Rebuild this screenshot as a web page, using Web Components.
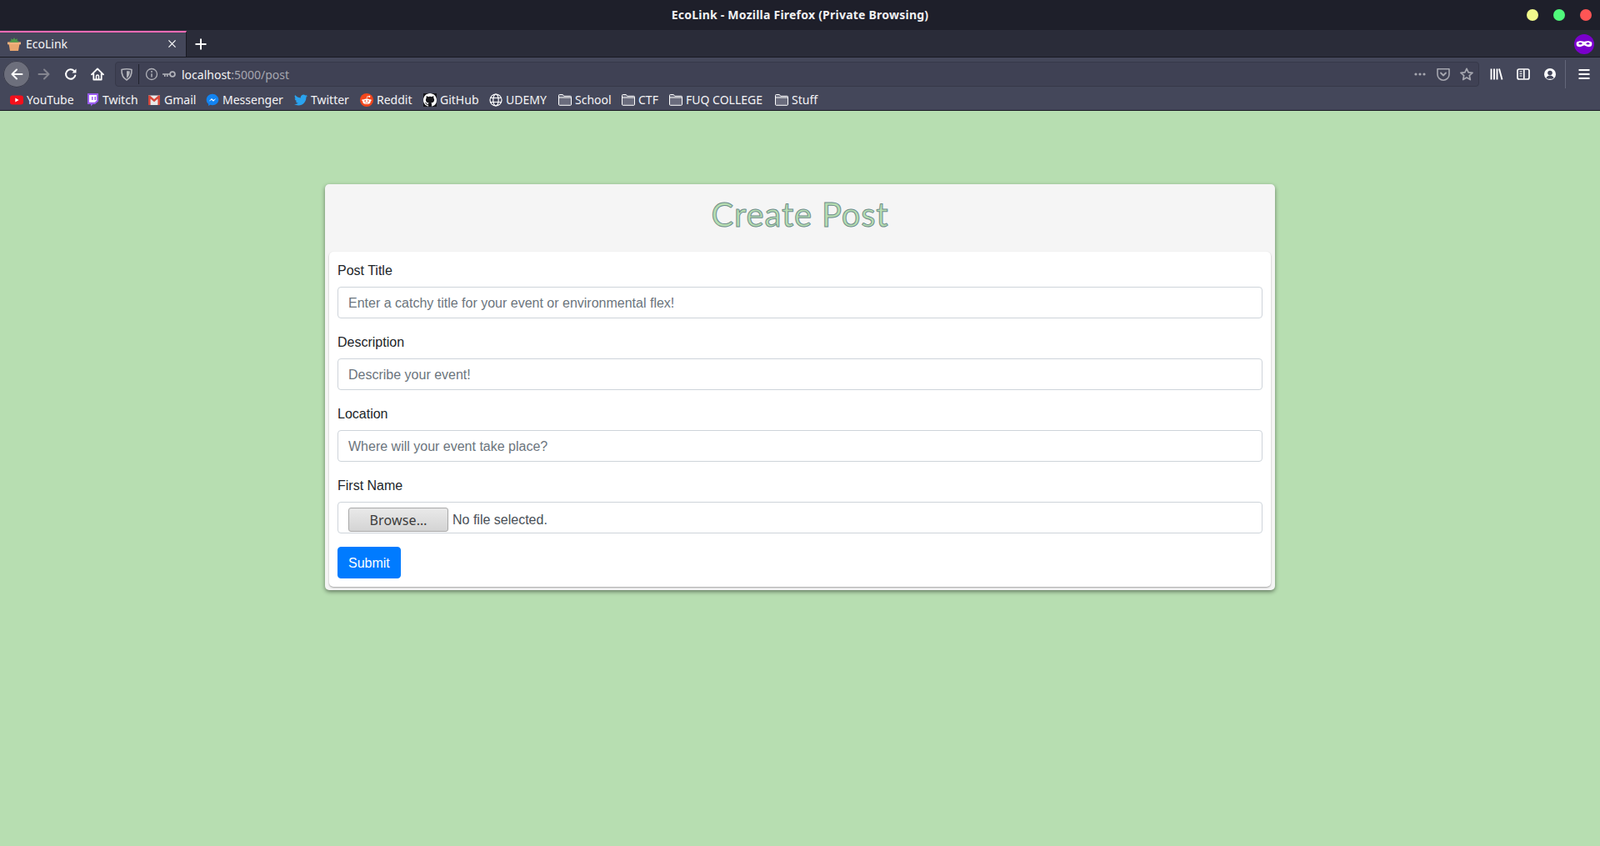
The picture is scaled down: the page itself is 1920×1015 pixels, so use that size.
<!DOCTYPE html>
<html lang="en">
<head>
<meta charset="utf-8">
<title>EcoLink</title>
<style>
	html, body {
		margin: 0;
		height: 100%;
		overflow: hidden;
	}
</style>
</head>
<body>
<ff-window>
	<ff-titlebar slot="chrome" heading="EcoLink - Mozilla Firefox (Private Browsing)"></ff-titlebar>
	<ff-tabbar slot="chrome" label="EcoLink"></ff-tabbar>
	<ff-toolbar slot="chrome"></ff-toolbar>
	<ff-bookmarks slot="chrome">
		<ff-bookmark icon="youtube" width="91">YouTube</ff-bookmark>
		<ff-bookmark icon="twitch" width="74">Twitch</ff-bookmark>
		<ff-bookmark icon="gmail" width="70">Gmail</ff-bookmark>
		<ff-bookmark icon="messenger" width="106">Messenger</ff-bookmark>
		<ff-bookmark icon="twitter" width="79">Twitter</ff-bookmark>
		<ff-bookmark icon="reddit" width="76">Reddit</ff-bookmark>
		<ff-bookmark icon="github" width="79">GitHub</ff-bookmark>
		<ff-bookmark icon="globe" width="83">UDEMY</ff-bookmark>
		<ff-bookmark icon="folder" width="76">School</ff-bookmark>
		<ff-bookmark icon="folder" width="57">CTF</ff-bookmark>
		<ff-bookmark icon="folder" width="127">FUQ COLLEGE</ff-bookmark>
		<ff-bookmark icon="folder" width="70">Stuff</ff-bookmark>
	</ff-bookmarks>

	<eco-post-card heading="Create Post">
		<eco-field label="Post Title" placeholder="Enter a catchy title for your event or environmental flex!"></eco-field>
		<eco-field label="Description" placeholder="Describe your event!"></eco-field>
		<eco-field label="Location" placeholder="Where will your event take place?"></eco-field>
		<eco-field label="First Name" type="file"></eco-field>
		<eco-button>Submit</eco-button>
	</eco-post-card>
</ff-window>

<script>
const UI_FONT = `"Noto Sans", sans-serif`;
const PAGE_FONT = `"Liberation Sans", Arial, sans-serif`;

const icons = {
	favicon: `<path d="M1.500 7.500h13L13 16H3z" fill="#e9a66f"/><path d="M0 5.500h16v2.800H0z" fill="#f0b27e"/><path d="M8 0l1.400 2.400L12 1.200l-.5 2.600 2.300.9-1.300 1H3.500l-1.300-1 2.300-.9L4 1.200l2.600 1.200z" fill="#4f9a4a"/>`,
	back: `<path d="M14.500 8H2.500M8 2.500 2.500 8 8 13.500" fill="none" stroke="#fff" stroke-width="2" stroke-linecap="round" stroke-linejoin="round"/>`,
	forward: `<path d="M1.500 8h12M8 2.500 13.500 8 8 13.500" fill="none" stroke="#84858f" stroke-width="2" stroke-linecap="round" stroke-linejoin="round"/>`,
	reload: `<path d="M13.300 9.500A5.700 5.700 0 1 1 12 4.200" fill="none" stroke="#fff" stroke-width="2" stroke-linecap="round"/><path d="M14.500 1.500v5h-5z" fill="#fff"/>`,
	home: `<path d="M1 8.300 8 1.500l7 6.800M3.300 7v7.500h9.400V7" fill="none" stroke="#fff" stroke-width="1.800" stroke-linecap="round" stroke-linejoin="round"/><path d="M6.500 14.500v-4a1.500 1.500 0 0 1 3 0v4" fill="none" stroke="#fff" stroke-width="1.500"/>`,
	shield: `<path d="M2 2.500C5 1.700 11 1.700 14 2.500c.3 6-1.500 10-6 12.500C3.500 12.500 1.700 8.500 2 2.500z" fill="none" stroke="#b1b2b9" stroke-width="1.600" stroke-linejoin="round"/><path d="M8 4.200c1.400 0 2.500.1 3.800.4.100 3.600-1.100 6.400-3.800 8.100z" fill="#b1b2b9"/>`,
	info: `<circle cx="8" cy="8" r="6.500" fill="none" stroke="#b1b2b9" stroke-width="1.300"/><path d="M8 7.200v4.300" stroke="#b1b2b9" stroke-width="1.500"/><circle cx="8" cy="4.900" r="1" fill="#b1b2b9"/>`,
	key: `<circle cx="12" cy="8" r="2.900" fill="none" stroke="#b1b2b9" stroke-width="1.800"/><path d="M0 7.200h9.200v1.600H6.500V11H5V8.800H3.600V11H2V8.800H0z" fill="#b1b2b9"/>`,
	dots: `<circle cx="3" cy="8" r="1.600" fill="#a6a7b0"/><circle cx="8" cy="8" r="1.600" fill="#a6a7b0"/><circle cx="13" cy="8" r="1.600" fill="#a6a7b0"/>`,
	pocket: `<path d="M1 1.800h14v6.400a7 7 0 0 1-14 0z" fill="none" stroke="#a6a7b0" stroke-width="1.600" stroke-linejoin="round"/><path d="M5 6.500l3 3 3-3" fill="none" stroke="#a6a7b0" stroke-width="1.800" stroke-linecap="round" stroke-linejoin="round"/>`,
	star: `<path d="M8 1.300l2.100 4.500 4.900.6-3.700 3.300 1 4.900L8 12.100l-4.300 2.500 1-4.900L1 6.400l4.900-.6z" fill="none" stroke="#a6a7b0" stroke-width="1.700" stroke-linejoin="round"/>`,
	library: `<path d="M1.500 1.500v13M5 1.500v13M8.500 1.500v13M11 1.500l3.500 13" fill="none" stroke="#fff" stroke-width="1.900"/>`,
	sidebar: `<rect x="1" y="2" width="14" height="12" rx="2" fill="none" stroke="#fff" stroke-width="1.700"/><path d="M8.800 2.500v11" stroke="#fff" stroke-width="1.700"/><path d="M3.500 5h3M3.500 7.500h3M3.500 10h3" stroke="#fff" stroke-width="1.200"/>`,
	account: `<circle cx="8" cy="8" r="7" fill="#fff"/><circle cx="8" cy="6.500" r="2.800" fill="#42455a"/><path d="M3.400 12.400c1-2 2.800-3 4.600-3s3.600 1 4.600 3A6 6 0 0 1 8 13.600a6 6 0 0 1-4.600-1.200z" fill="#42455a"/>`,
	menu: `<path d="M1.500 3h13M1.500 8h13M1.500 13h13" stroke="#fff" stroke-width="2"/>`,
	close: `<path d="M3 3l10 10M13 3 3 13" stroke="#fff" stroke-width="1.500"/>`,
	plus: `<path d="M8 1.500v13M1.500 8h13" stroke="#fff" stroke-width="2"/>`,
	mask: `<circle cx="8" cy="8" r="8" fill="#7a00cc"/><path d="M1.900 6.600C3 5.400 6 5.300 8 6c2-.7 5-.6 6.100.6.400 1.300 0 2.800-1 3.300-1.700.6-3.500-.1-5.100-1-1.600.9-3.400 1.600-5.100 1-1-.5-1.400-2-1-3.300z" fill="#fff"/><ellipse cx="5" cy="7.500" rx="1.300" ry=".8" fill="#7a00cc"/><ellipse cx="11" cy="7.500" rx="1.300" ry=".8" fill="#7a00cc"/>`,
	youtube: `<rect x="0" y="2.500" width="16" height="11" rx="3" fill="#f4101c"/><path d="M6.300 5.500v5L10.600 8z" fill="#fff"/>`,
	twitch: `<path d="M2 0h13v9.500L11 13H8.500L6 15.500V13H2z" fill="#9a5cf0"/><path d="M4 2h9v6.500L10.800 10.800H4z" fill="#fff"/><path d="M7 4h1.500v4H7zM10.500 4H12v4h-1.500z" fill="#9a5cf0"/>`,
	gmail: `<rect x="1" y="2.500" width="14" height="11.500" fill="#e8e8e8"/><path d="M1 2.500h1.800L8 7l5.200-4.500H15V14h-2.600V6.600L8 10.200 3.600 6.600V14H1z" fill="#d6473a"/>`,
	messenger: `<path d="M8 .8C3.900.8.700 3.800.700 7.700c0 2.100.9 3.900 2.400 5.100V15l2.200-1.200c.8.200 1.700.4 2.700.4 4.100 0 7.300-3 7.300-6.500S12.100.8 8 .8z" fill="#1283f0"/><path d="M3.500 9.800 7 5.900l2 2 3.500-2-3.500 3.900-2-2z" fill="#fff"/>`,
	twitter: `<g transform="scale(.667)"><path d="M23.953 4.570a10 10 0 0 1-2.825.775 4.958 4.958 0 0 0 2.163-2.723c-.951.555-2.005.959-3.127 1.184a4.920 4.920 0 0 0-8.384 4.482C7.690 8.095 4.067 6.130 1.640 3.162a4.822 4.822 0 0 0-.666 2.475c0 1.710.870 3.213 2.188 4.096a4.904 4.904 0 0 1-2.228-.616v.060a4.923 4.923 0 0 0 3.946 4.827 4.996 4.996 0 0 1-2.212.085 4.936 4.936 0 0 0 4.604 3.417 9.867 9.867 0 0 1-6.102 2.105c-.390 0-.779-.023-1.170-.067a13.995 13.995 0 0 0 7.557 2.209c9.053 0 13.998-7.496 13.998-13.985 0-.210 0-.420-.015-.630A9.935 9.935 0 0 0 24 4.590z" fill="#2aa3ef"/></g>`,
	reddit: `<circle cx="8" cy="8" r="8" fill="#f2461c"/><ellipse cx="8" cy="9.800" rx="4.700" ry="3.200" fill="#fff"/><circle cx="3.400" cy="8.300" r="1.100" fill="#fff"/><circle cx="12.600" cy="8.300" r="1.100" fill="#fff"/><circle cx="11.300" cy="3.800" r="1" fill="#fff"/><path d="M8 6.700 8.800 3.600l2.300.4" fill="none" stroke="#fff" stroke-width=".7"/><circle cx="6.200" cy="9.100" r=".9" fill="#f2461c"/><circle cx="9.800" cy="9.100" r=".9" fill="#f2461c"/><path d="M6.200 11.300c1 .6 2.600.6 3.600 0" fill="none" stroke="#f2461c" stroke-width=".7"/>`,
	github: `<rect width="16" height="16" fill="#16161a"/><path d="M8 0C3.580 0 0 3.580 0 8c0 3.540 2.290 6.530 5.470 7.590.4.070.550-.170.550-.380 0-.190-.010-.820-.010-1.490-2.010.370-2.530-.490-2.690-.940-.090-.230-.480-.940-.820-1.130-.280-.150-.680-.520-.010-.530.630-.010 1.080.580 1.230.820.720 1.210 1.870.870 2.330.660.070-.520.280-.870.510-1.070-1.780-.200-3.640-.890-3.640-3.950 0-.870.310-1.590.820-2.150-.080-.200-.360-1.020.080-2.120 0 0 .670-.210 2.200.820.640-.180 1.320-.270 2-.270.680 0 1.360.090 2 .270 1.530-1.040 2.200-.820 2.200-.820.440 1.100.160 1.920.080 2.120.510.560.820 1.270.820 2.150 0 3.070-1.870 3.750-3.650 3.950.290.250.540.730.540 1.480 0 1.070-.010 1.930-.010 2.200 0 .210.150.460.550.380A8.013 8.013 0 0 0 16 8c0-4.420-3.580-8-8-8z" fill="#fff"/>`,
	globe: `<g fill="none" stroke="#fff" stroke-width="1.200"><circle cx="8" cy="8" r="7"/><ellipse cx="8" cy="8" rx="3.200" ry="7"/><path d="M1.600 5.500h12.800M1.600 10.500h12.800"/></g>`,
	folder: `<path d="M.5 2.500a1 1 0 0 1 1-1h3.800l1.400 1.800h7.800a1 1 0 0 1 1 1v9a1 1 0 0 1-1 1h-13a1 1 0 0 1-1-1z" fill="#6a6c7d" stroke="#fff"/><path d="M.5 5h15" stroke="#fff"/>`,
};

class FfIcon extends HTMLElement {

	constructor() {
		super();

		const size = this.getAttribute('size') || 16;

		this.attachShadow({ mode: 'open' });
		this.shadowRoot.innerHTML = `
			<style>
				:host {
					display: block;
					flex: none;
					width: ${size}px;
					height: ${size}px;
				}

				svg {
					display: block;
					width: 100%;
					height: 100%;
				}
			</style>
			<svg viewBox="0 0 16 16" aria-hidden="true">${icons[this.getAttribute('name')]}</svg>
		`;
	}

}

const windowTemplate = document.createElement('template');
windowTemplate.innerHTML = `
	<style>
		:host {
			display: flex;
			flex-direction: column;
			height: 1015px;
		}

		main {
			flex: 1;
			padding-top: 88px;
			background: #b7deb1;
		}
	</style>
	<slot name="chrome"></slot>
	<main><slot></slot></main>
`;

class FfWindow extends HTMLElement {

	constructor() {
		super();

		this.attachShadow({ mode: 'open' });
		this.shadowRoot.appendChild(windowTemplate.content.cloneNode(true));
	}

}

class FfTitlebar extends HTMLElement {

	constructor() {
		super();

		this.attachShadow({ mode: 'open' });
		this.shadowRoot.innerHTML = `
			<style>
				:host {
					display: grid;
					grid-template-columns: 1fr auto 1fr;
					align-items: center;
					box-sizing: border-box;
					height: 36px;
					background: #1e1f2a;
					color: #f1f1f3;
					font: 700 14px ${UI_FONT};
					letter-spacing: .23px;
				}

				.title {
					padding-bottom: 1px;
				}

				.dots {
					display: flex;
					justify-content: flex-end;
					gap: 18px;
					padding-right: 10px;
				}

				.dots span {
					width: 14px;
					height: 14px;
					border-radius: 50%;
				}
			</style>
			<span></span>
			<span class="title">${this.getAttribute('heading')}</span>
			<div class="dots">
				<span style="background: #f1fa8c"></span>
				<span style="background: #50fa7b"></span>
				<span style="background: #ff5555"></span>
			</div>
		`;
	}

}

class FfTabbar extends HTMLElement {

	constructor() {
		super();

		this.attachShadow({ mode: 'open' });
		this.shadowRoot.innerHTML = `
			<style>
				:host {
					display: flex;
					align-items: stretch;
					height: 33px;
					box-sizing: border-box;
					padding-top: 1px;
					background: #2a2c39;
					border-bottom: 1px solid #191a23;
					font: 14px ${UI_FONT};
					color: #f4f4f6;
				}

				.tab {
					display: flex;
					align-items: center;
					gap: 6px;
					box-sizing: border-box;
					width: 224px;
					padding: 0 10px 2px 9px;
					background: #44475a;
					border-top: 2px solid #ff6bb5;
					border-right: 1px solid #191a23;
				}

				.close {
					margin-left: auto;
				}

				.new {
					margin: auto 0 auto 9px;
				}

				.badge {
					margin: auto 7px auto auto;
				}
			</style>
			<div class="tab">
				<ff-icon name="favicon"></ff-icon>
				<span>${this.getAttribute('label')}</span>
				<ff-icon class="close" name="close" size="13"></ff-icon>
			</div>
			<ff-icon class="new" name="plus" size="16"></ff-icon>
			<ff-icon class="badge" name="mask" size="24"></ff-icon>
		`;
	}

}

const toolbarTemplate = document.createElement('template');
toolbarTemplate.innerHTML = `
	<style>
		:host {
			display: flex;
			align-items: center;
			height: 40px;
			padding: 0 11px 0 4px;
			background: #44475a;
			font: 14px ${UI_FONT};
		}

		.back {
			display: grid;
			place-items: center;
			flex: none;
			width: 32px;
			height: 32px;
			border-radius: 50%;
			background: #6d6f7c;
			box-shadow: inset 0 0 0 1px #3a3c4c;
		}

		.forward {
			margin-left: 9px;
		}

		.reload {
			margin-left: 16px;
		}

		.home {
			margin-left: 16px;
		}

		.url {
			display: flex;
			align-items: center;
			flex: 1;
			box-sizing: border-box;
			height: 30px;
			margin-left: 13px;
			padding: 0 6px 0 0;
			border: 1px solid #363849;
			border-radius: 4px;
			background: #3f4154;
		}

		.shield {
			margin-left: 5px;
		}

		.divider {
			width: 1px;
			height: 24px;
			margin-left: 6px;
			background: #22232e;
		}

		.info {
			margin-left: 7px;
		}

		.key {
			margin-left: 5px;
		}

		.address {
			margin-left: 7px;
			color: #f4f4f6;
			white-space: nowrap;
		}

		.address span {
			color: #a6a7b0;
		}

		.dots {
			margin-left: auto;
		}

		.pocket {
			margin-left: 12px;
		}

		.star {
			margin-left: 12px;
		}

		.library {
			margin-left: 13px;
		}

		.sidebar,
		.account {
			margin-left: 16px;
		}

		.sep {
			width: 1px;
			height: 34px;
			margin: 0 14px 0 10px;
			background: #64667a;
		}
	</style>
	<div class="back"><ff-icon name="back"></ff-icon></div>
	<ff-icon class="forward" name="forward"></ff-icon>
	<ff-icon class="reload" name="reload"></ff-icon>
	<ff-icon class="home" name="home"></ff-icon>
	<div class="url">
		<ff-icon class="shield" name="shield"></ff-icon>
		<div class="divider"></div>
		<ff-icon class="info" name="info"></ff-icon>
		<ff-icon class="key" name="key"></ff-icon>
		<div class="address">localhost<span>:5000/post</span></div>
		<ff-icon class="dots" name="dots"></ff-icon>
		<ff-icon class="pocket" name="pocket"></ff-icon>
		<ff-icon class="star" name="star"></ff-icon>
	</div>
	<ff-icon class="library" name="library"></ff-icon>
	<ff-icon class="sidebar" name="sidebar"></ff-icon>
	<ff-icon class="account" name="account"></ff-icon>
	<div class="sep"></div>
	<ff-icon name="menu"></ff-icon>
`;

class FfToolbar extends HTMLElement {

	constructor() {
		super();

		this.attachShadow({ mode: 'open' });
		this.shadowRoot.appendChild(toolbarTemplate.content.cloneNode(true));
	}

}

const bookmarksTemplate = document.createElement('template');
bookmarksTemplate.innerHTML = `
	<style>
		:host {
			display: flex;
			align-items: center;
			box-sizing: border-box;
			height: 24px;
			padding: 0 0 2px 12px;
			background: #44475a;
			border-bottom: 1px solid #191a23;
		}
	</style>
	<slot></slot>
`;

class FfBookmarks extends HTMLElement {

	constructor() {
		super();

		this.attachShadow({ mode: 'open' });
		this.shadowRoot.appendChild(bookmarksTemplate.content.cloneNode(true));
	}

}

class FfBookmark extends HTMLElement {

	constructor() {
		super();

		this.attachShadow({ mode: 'open' });
		this.shadowRoot.innerHTML = `
			<style>
				:host {
					display: flex;
					align-items: center;
					gap: 4px;
					flex: none;
					width: ${this.getAttribute('width')}px;
					color: #f4f4f6;
					font: 14px ${UI_FONT};
					white-space: nowrap;
				}
			</style>
			<ff-icon name="${this.getAttribute('icon')}"></ff-icon>
			<slot></slot>
		`;
	}

}

const cardTemplate = document.createElement('template');
cardTemplate.innerHTML = `
	<style>
		:host {
			display: block;
			box-sizing: border-box;
			width: 1140px;
			margin: 0 auto;
			padding: 0 5px 4px;
			border-radius: 5px;
			background: #f5f5f5;
			box-shadow: 0 2px 5px rgba(0, 0, 0, .45);
		}

		h1 {
			display: flex;
			align-items: center;
			justify-content: center;
			box-sizing: border-box;
			height: 81px;
			margin: 0;
			padding-bottom: 9px;
			font: 400 40px Lato, sans-serif;
			letter-spacing: .8px;
			color: #b7deb1;
			-webkit-text-stroke: 1px #6f8f8c;
		}

		.body {
			padding: 10px;
			border-radius: 5px;
			background: #fff;
			box-shadow: 0 1px 2px rgba(0, 0, 0, .35);
			display: flex;
			flex-direction: column;
			align-items: flex-start;
			gap: 16px;
		}
	</style>
	<h1></h1>
	<div class="body"><slot></slot></div>
`;

class EcoPostCard extends HTMLElement {

	constructor() {
		super();

		this.attachShadow({ mode: 'open' });
		this.shadowRoot.appendChild(cardTemplate.content.cloneNode(true));
		this.shadowRoot.querySelector('h1').textContent = this.getAttribute('heading');
	}

}

class EcoField extends HTMLElement {

	constructor() {
		super();

		const isFile = this.getAttribute('type') === 'file';
		const control = isFile
			? `<div class="control file"><span class="browse">Browse…</span><span>No file selected.</span></div>`
			: `<input class="control" type="text" placeholder="${this.getAttribute('placeholder')}">`;

		this.attachShadow({ mode: 'open' });
		this.shadowRoot.innerHTML = `
			<style>
				:host {
					display: block;
					align-self: stretch;
					font: 16px/24px ${PAGE_FONT};
					color: #212529;
				}

				label {
					display: block;
					padding-top: 1px;
					margin-bottom: 7px;
				}

				.control {
					display: block;
					box-sizing: border-box;
					width: 100%;
					height: 38px;
					padding: 7px 12px 5px;
					border: 1px solid #ced4da;
					border-radius: 4px;
					background: #fff;
					font: inherit;
					color: #495057;
				}

				.control::placeholder {
					color: #6c757d;
					opacity: 1;
				}

				.file {
					display: flex;
					align-items: flex-start;
					gap: 5px;
					padding: 6px 12px 0;
				}

				.browse {
					display: grid;
					place-items: center;
					flex: none;
					box-sizing: border-box;
					width: 120px;
					height: 29px;
					border: 1px solid #a8a8a8;
					border-radius: 3px;
					background: linear-gradient(#e9e9e9, #d4d4d4);
					color: #3c3c3c;
					font: 16px "Noto Sans", sans-serif;
					letter-spacing: .15px;
				}

				.file span:last-child {
					padding-top: 3px;
				}
			</style>
			<label>${this.getAttribute('label')}</label>
			${control}
		`;
	}

}

const buttonTemplate = document.createElement('template');
buttonTemplate.innerHTML = `
	<style>
		:host {
			display: block;
		}

		button {
			display: block;
			height: 38px;
			padding: 7px 12px 5px;
			border: 1px solid #007bff;
			border-radius: 4px;
			background: #007bff;
			color: #fff;
			font: 16px/24px ${PAGE_FONT};
		}
	</style>
	<button type="button"><slot></slot></button>
`;

class EcoButton extends HTMLElement {

	constructor() {
		super();

		this.attachShadow({ mode: 'open' });
		this.shadowRoot.appendChild(buttonTemplate.content.cloneNode(true));
	}

}

customElements.define('ff-icon', FfIcon);
customElements.define('ff-window', FfWindow);
customElements.define('ff-titlebar', FfTitlebar);
customElements.define('ff-tabbar', FfTabbar);
customElements.define('ff-toolbar', FfToolbar);
customElements.define('ff-bookmarks', FfBookmarks);
customElements.define('ff-bookmark', FfBookmark);
customElements.define('eco-post-card', EcoPostCard);
customElements.define('eco-field', EcoField);
customElements.define('eco-button', EcoButton);
</script>
</body>
</html>
